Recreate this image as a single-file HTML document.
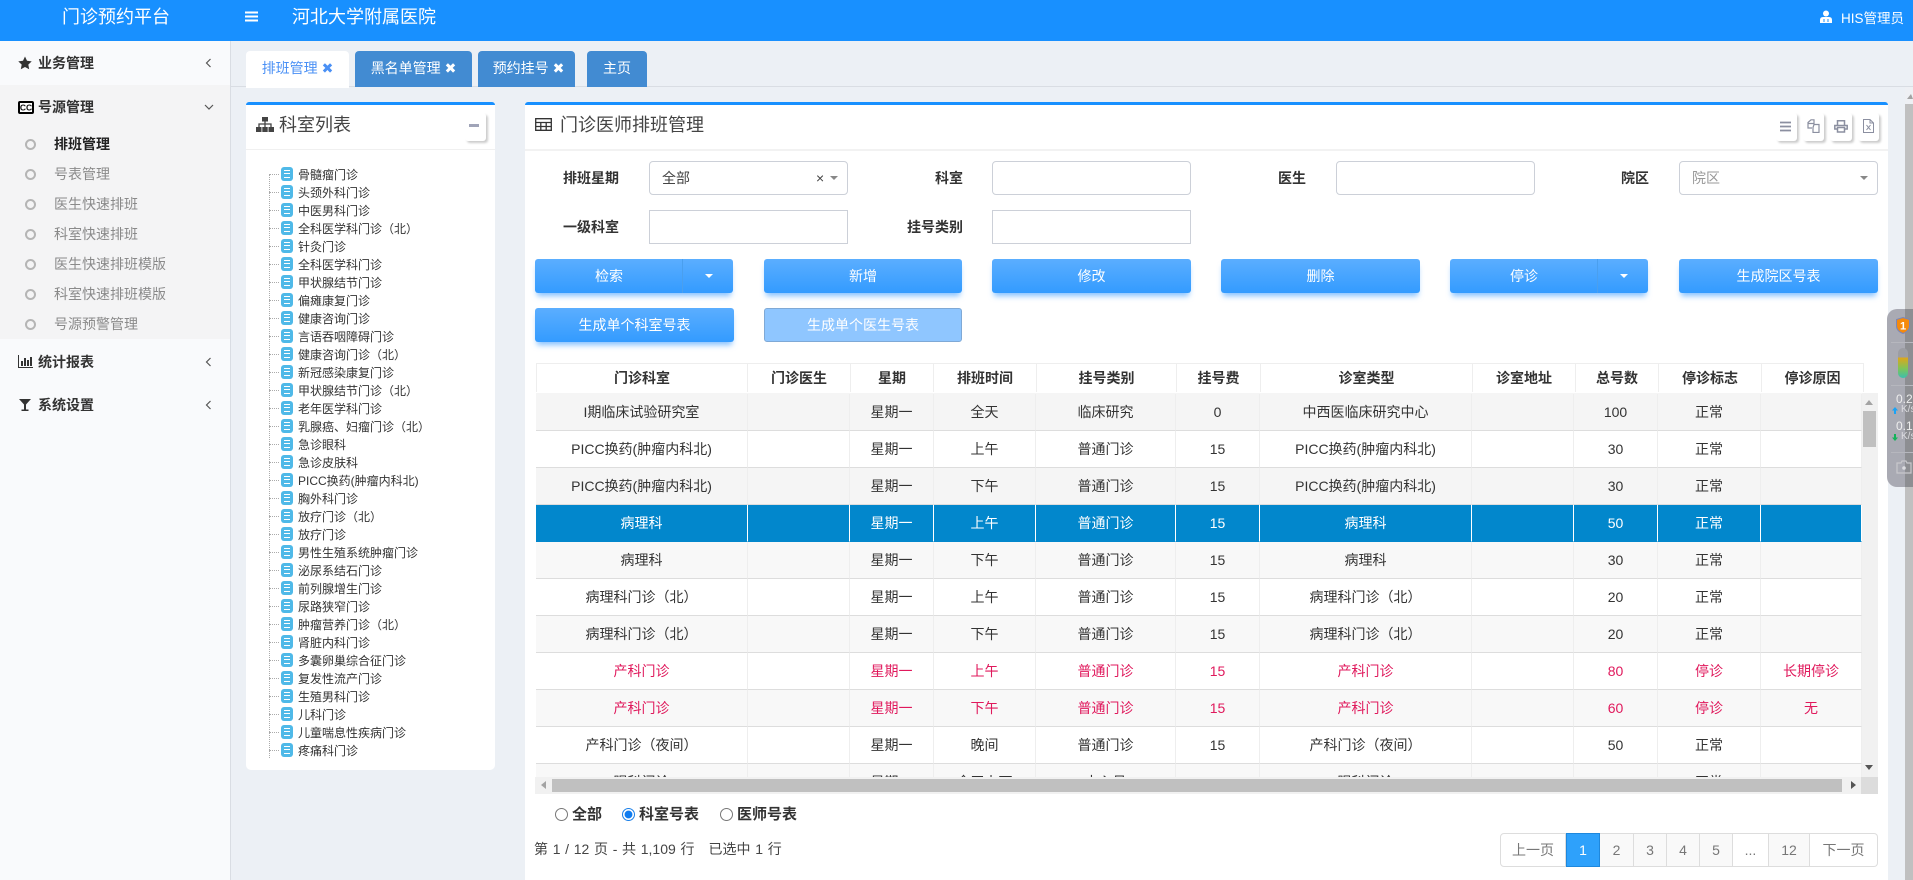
<!DOCTYPE html>
<html lang="zh"><head><meta charset="utf-8"><title>门诊预约平台</title>
<style>
*{box-sizing:border-box}
html,body{margin:0;padding:0;width:1913px;height:880px;overflow:hidden;background:#ecf0f5;font-family:"Liberation Sans","Noto Sans CJK SC",sans-serif;font-size:14px;color:#333}
.a{position:absolute}
#hd{left:0;top:0;width:1913px;height:41px;background:#1890ff;color:#fff}
#side{left:0;top:41px;width:231px;height:839px;background:#f9fafc;border-right:1px solid #d9dde3}
.m{position:absolute;left:38px;font-weight:bold;line-height:20px;color:#333}
.s{position:absolute;left:54px;line-height:20px;color:#8a8a8a}
.c{position:absolute;left:25px;width:11px;height:11px;border:2px solid #b5b5b5;border-radius:50%}
.tab{position:absolute;top:51px;height:36px;line-height:34px;text-align:center;color:#fff;background:#428bd2;border-radius:4px 4px 0 0;font-size:14px}
.panel{position:absolute;background:#fff;border-top:3px solid #1890ff;border-radius:3px 3px 0 0}
.lab{position:absolute;width:90px;text-align:right;font-weight:bold;line-height:20px;color:#333}
.in{position:absolute;width:199px;height:34px;background:#fff;border:1px solid #ccd0d8;border-radius:4px}
.btn{position:absolute;height:34px;line-height:35px;text-align:center;color:#fff;background:linear-gradient(#5baeff,#339bff);border-radius:3px;box-shadow:0 5px 6px -2px rgba(50,150,255,.6)}
.sp{position:absolute;top:0;bottom:0;border-left:1px solid #4a9fee}
.cr{position:absolute;width:0;height:0;border-left:4px solid transparent;border-right:4px solid transparent;border-top:4px solid #fff}
table{border-collapse:separate;border-spacing:0;table-layout:fixed;font-size:14px}
td,th{text-align:center;padding:0;overflow:hidden;white-space:nowrap}
#th{left:536px;top:363px;width:1328px;background:#fff}
#th th{height:29px;border-top:1px solid #eee;border-right:1px solid #eee;font-weight:bold;color:#333}
#th th:first-child{border-left:1px solid #eee}
#bw{left:536px;top:393px;width:1326px;height:384px;overflow:hidden;background:#f5f5f5}
#tb{position:absolute;left:0;top:1px;width:1326px}
#tb td{height:37px;border-bottom:1px solid #ddd;border-right:1px solid #eee;color:#333;background:#fff}
#tb tr.g td{background:#f8f8f8}
#tb tr.h td{background:#f5f5f5}
#tb tr.r td{color:#e0195c}
#tb tr.x td{background:#0287cc;color:#fff;border-right-color:#fff;border-bottom-color:#0287cc}
.tree{position:absolute;left:298px;top:166px;margin:0;padding:0;list-style:none;font-size:12px;color:#333}
.tree li{height:18px;line-height:18px;position:relative;white-space:nowrap}
.tree li:before{content:"";position:absolute;left:-17px;top:1px;width:12px;height:14px;border-radius:3px;background:linear-gradient(#fff,#fff) 3px 3px/6px 1.4px no-repeat,linear-gradient(#fff,#fff) 3px 6.3px/6px 1.4px no-repeat,linear-gradient(#fff,#fff) 3px 9.6px/6px 1.4px no-repeat,#4fb9e8}
.tree li:after{content:"";position:absolute;left:-29px;top:8px;width:10px;border-top:1px dotted #aaa}
.tb{position:absolute;top:113px;height:28px;background:#fff;border-radius:3px;box-shadow:2px 2px 2px #ccc}
.pg{position:absolute;top:833px;height:34px;line-height:33px;text-align:center;color:#777;border:1px solid #ddd;border-left:0;background:#f9f9f9}
.rd{position:absolute;top:808px;width:13px;height:13px;border:1px solid #777;border-radius:50%;background:#fff}
.rt{position:absolute;top:805px;font-weight:bold;font-size:15px;line-height:20px;color:#333}
</style></head><body>

<div id="hd" class="a">
<div class="a" style="left:62px;top:4px;font-size:18px;line-height:26px">门诊预约平台</div>
<svg class="a" style="left:245px;top:11px" width="13" height="11"><path d="M0 1.500h13M0 5.500h13M0 9.500h13" stroke="#fff" stroke-width="2"/></svg>
<div class="a" style="left:292px;top:4px;font-size:18px;line-height:26px">河北大学附属医院</div>
<svg class="a" style="left:1820px;top:10px" width="12" height="13" viewBox="0 0 12 13"><circle cx="6" cy="3.500" r="3" fill="#fff"/><path d="M0 13V10Q0 7 3 7H9Q12 7 12 10V13Z" fill="#fff"/><path d="M4 9v3M8 9v3" stroke="#1890ff"/></svg>
<div class="a" style="left:1841px;top:9px;font-size:13.5px;line-height:20px">HIS管理员</div>
</div>

<div id="side" class="a">
<div class="a" style="left:0;top:44px;width:230px;height:254px;background:#f4f4f5"></div>
<svg class="a" style="left:18px;top:15px" width="14" height="14" viewBox="0 0 14 14"><path d="M7 .5l2 4.300 4.700.6-3.400 3.200.9 4.700L7 11l-4.200 2.300.9-4.700L.3 5.400 5 4.800z" fill="#333"/></svg>
<div class="m" style="top:12px">业务管理</div>
<svg class="a" style="left:205px;top:17px" width="7" height="10"><path d="M5.500 1L1.500 5l4 4" fill="none" stroke="#555" stroke-width="1.200"/></svg>

<svg class="a" style="left:18px;top:60px" width="16" height="13" viewBox="0 0 16 13"><rect x="1" y="1" width="14" height="11" rx="1" fill="#fff" stroke="#000" stroke-width="2"/><text x="8" y="9.600" font-size="8.500" font-weight="bold" text-anchor="middle" fill="#111" font-family="Liberation Sans">CC</text></svg>
<div class="m" style="top:56px">号源管理</div>
<svg class="a" style="left:204px;top:63px" width="10" height="7"><path d="M1 1l4 4 4-4" fill="none" stroke="#555" stroke-width="1.200"/></svg>

<div class="c" style="top:98px"></div><div class="s" style="top:93px;color:#222;font-weight:bold">排班管理</div>
<div class="c" style="top:128px"></div><div class="s" style="top:123px">号表管理</div>
<div class="c" style="top:158px"></div><div class="s" style="top:153px">医生快速排班</div>
<div class="c" style="top:188px"></div><div class="s" style="top:183px">科室快速排班</div>
<div class="c" style="top:218px"></div><div class="s" style="top:213px">医生快速排班模版</div>
<div class="c" style="top:248px"></div><div class="s" style="top:243px">科室快速排班模版</div>
<div class="c" style="top:278px"></div><div class="s" style="top:273px">号源预警管理</div>

<svg class="a" style="left:18px;top:314px" width="15" height="13" viewBox="0 0 15 13"><path d="M.5 0v12.500H15" fill="none" stroke="#333"/><path d="M3 6h2v5H3zM6 3h2v8H6zM9 5h2v6H9zM12 2h2v9h-2z" fill="#333"/></svg>
<div class="m" style="top:311px">统计报表</div>
<svg class="a" style="left:205px;top:316px" width="7" height="10"><path d="M5.500 1L1.500 5l4 4" fill="none" stroke="#555" stroke-width="1.200"/></svg>
<svg class="a" style="left:19px;top:358px" width="12" height="12" viewBox="0 0 12 12"><path d="M0 0h12L7 5.500V10.500H9.500V12H2.500V10.500H5V5.500z" fill="#333"/></svg>
<div class="m" style="top:354px">系统设置</div>
<svg class="a" style="left:205px;top:359px" width="7" height="10"><path d="M5.500 1L1.500 5l4 4" fill="none" stroke="#555" stroke-width="1.200"/></svg>
</div>

<div class="a" style="left:231px;top:86px;width:1682px;height:1px;background:#d9dde3"></div>
<div class="tab" style="left:246px;width:103px;background:#fff;color:#4a90f5;height:37px">排班管理 ✖</div>
<div class="tab" style="left:355px;width:117px">黑名单管理 ✖</div>
<div class="tab" style="left:478px;width:97px;padding-left:4px">预约挂号 ✖</div>
<div class="tab" style="left:587px;width:60px">主页</div>

<div class="panel" style="left:246px;top:102px;width:249px;height:668px;border-radius:3px 3px 5px 5px"></div>
<div class="a" style="left:246px;top:149px;width:249px;height:1px;background:#f0f0f0"></div>
<svg class="a" style="left:256px;top:117px" width="18" height="15" viewBox="0 0 18 15"><path d="M6 0h6v4.500H6zM0 10h5.500v5H0zM6.300 10h5.400v5H6.300zM12.500 10H18v5h-5.500z" fill="#444"/><path d="M9 4v6M3 10V7h12v3" fill="none" stroke="#444" stroke-width="1.300"/></svg>
<div class="a" style="left:279px;top:112px;font-size:18px;line-height:26px;color:#444">科室列表</div>
<div class="tb" style="left:465px;width:21px"><div class="a" style="left:4px;top:11px;width:10px;height:3px;background:#a0a4b8"></div></div>

<div class="a" style="left:269px;top:174px;height:584px;border-left:1px dotted #aaa"></div>
<ul class="tree">
<li>骨髓瘤门诊</li><li>头颈外科门诊</li><li>中医男科门诊</li><li>全科医学科门诊（北）</li><li>针灸门诊</li><li>全科医学科门诊</li><li>甲状腺结节门诊</li><li>偏瘫康复门诊</li><li>健康咨询门诊</li><li>言语吞咽障碍门诊</li><li>健康咨询门诊（北）</li><li>新冠感染康复门诊</li><li>甲状腺结节门诊（北）</li><li>老年医学科门诊</li><li>乳腺癌、妇瘤门诊（北）</li><li>急诊眼科</li><li>急诊皮肤科</li><li>PICC换药(肿瘤内科北)</li><li>胸外科门诊</li><li>放疗门诊（北）</li><li>放疗门诊</li><li>男性生殖系统肿瘤门诊</li><li>泌尿系结石门诊</li><li>前列腺增生门诊</li><li>尿路狭窄门诊</li><li>肿瘤营养门诊（北）</li><li>肾脏内科门诊</li><li>多囊卵巢综合征门诊</li><li>复发性流产门诊</li><li>生殖男科门诊</li><li>儿科门诊</li><li>儿童喘息性疾病门诊</li><li>疼痛科门诊</li>
</ul>

<div class="panel" style="left:525px;top:102px;width:1363px;height:778px"></div>
<div class="a" style="left:525px;top:149px;width:1363px;height:2px;background:#f2f2f2"></div>
<svg class="a" style="left:535px;top:118px" width="17" height="13" viewBox="0 0 17 13"><path d="M.7.700h15.600v11.600H.7zM.7 4.500h15.600M.7 8.500h15.600M5.800 4.500v8M11.200 4.500v8" fill="none" stroke="#333" stroke-width="1.300"/></svg>
<div class="a" style="left:560px;top:112px;font-size:18px;line-height:26px;color:#444">门诊医师排班管理</div>
<div class="tb" style="left:1776px;width:21px"><svg class="a" style="left:4px;top:8px" width="12" height="11"><path d="M0 1.500h11M0 5.500h11M0 9.500h11" stroke="#8b8fa0" stroke-width="1.800"/></svg></div>
<div class="tb" style="left:1803px;width:21px"><svg class="a" style="left:4px;top:6px" width="13" height="14" viewBox="0 0 13 14"><path d="M1 3.500L4 .8h3v3.700H1zM1 4v5h4M7 5.500h5v8H6V8.500z" fill="none" stroke="#8b8fa0" stroke-width="1.200"/></svg></div>
<div class="tb" style="left:1830px;width:22px"><svg class="a" style="left:4px;top:7px" width="14" height="13" viewBox="0 0 14 13"><path d="M3.500 5V.8h7V5M3 9H.8V5.500h12.400V9H11M3.500 7.500h7v4.500h-7z" fill="none" stroke="#8b8fa0" stroke-width="1.500"/></svg></div>
<div class="tb" style="left:1858px;width:21px"><svg class="a" style="left:5px;top:6px" width="11" height="14" viewBox="0 0 11 14"><path d="M.5.500h6.500l3.500 3.500v9.500H.5zM7 .5V4h3.500" fill="none" stroke="#8b8fa0"/><path d="M3.500 6l4 5M7.500 6l-4 5" stroke="#8b8fa0"/></svg></div>

<div class="lab" style="left:529px;top:168px">排班星期</div>
<div class="in" style="left:649px;top:161px"><span class="a" style="left:12px;top:6px;line-height:20px;color:#444">全部</span><span class="a" style="left:166px;top:6px;line-height:20px;color:#444">×</span><span class="cr" style="left:180px;top:14px;border-top-color:#888"></span></div>
<div class="lab" style="left:873px;top:168px">科室</div>
<div class="in" style="left:992px;top:161px"></div>
<div class="lab" style="left:1216px;top:168px">医生</div>
<div class="in" style="left:1336px;top:161px"></div>
<div class="lab" style="left:1559px;top:168px">院区</div>
<div class="in" style="left:1679px;top:161px"><span class="a" style="left:12px;top:6px;line-height:20px;color:#999">院区</span><span class="cr" style="left:180px;top:14px;border-top-color:#888"></span></div>
<div class="lab" style="left:529px;top:217px">一级科室</div>
<div class="in" style="left:649px;top:210px;border-radius:0"></div>
<div class="lab" style="left:873px;top:217px">挂号类别</div>
<div class="in" style="left:992px;top:210px;border-radius:0"></div>

<div class="btn" style="left:535px;top:259px;width:198px;padding-right:50px">检索<i class="sp" style="left:147px"></i><i class="cr" style="left:170px;top:15px"></i></div>
<div class="btn" style="left:764px;top:259px;width:198px">新增</div>
<div class="btn" style="left:992px;top:259px;width:199px">修改</div>
<div class="btn" style="left:1221px;top:259px;width:199px">删除</div>
<div class="btn" style="left:1450px;top:259px;width:198px;padding-right:50px">停诊<i class="sp" style="left:147px"></i><i class="cr" style="left:170px;top:15px"></i></div>
<div class="btn" style="left:1679px;top:259px;width:199px">生成院区号表</div>
<div class="btn" style="left:535px;top:308px;width:199px">生成单个科室号表</div>
<div class="btn" style="left:764px;top:308px;width:198px;background:#8fc6ff;border:1px solid #7fa9d6;box-shadow:none;line-height:33px">生成单个医生号表</div>

<table id="th" class="a"><colgroup><col style="width:212px"><col style="width:103px"><col style="width:83px"><col style="width:103px"><col style="width:140px"><col style="width:84px"><col style="width:212px"><col style="width:103px"><col style="width:83px"><col style="width:103px"><col style="width:102px"></colgroup>
<tr><th>门诊科室</th><th>门诊医生</th><th>星期</th><th>排班时间</th><th>挂号类别</th><th>挂号费</th><th>诊室类型</th><th>诊室地址</th><th>总号数</th><th>停诊标志</th><th>停诊原因</th></tr></table>

<div id="bw" class="a"><table id="tb"><colgroup><col style="width:212px"><col style="width:102px"><col style="width:84px"><col style="width:102px"><col style="width:140px"><col style="width:84px"><col style="width:212px"><col style="width:102px"><col style="width:84px"><col style="width:103px"><col style="width:101px"></colgroup>
<tr class="g h"><td>I期临床试验研究室</td><td></td><td>星期一</td><td>全天</td><td>临床研究</td><td>0</td><td>中西医临床研究中心</td><td></td><td>100</td><td>正常</td><td></td></tr>
<tr><td>PICC换药(肿瘤内科北)</td><td></td><td>星期一</td><td>上午</td><td>普通门诊</td><td>15</td><td>PICC换药(肿瘤内科北)</td><td></td><td>30</td><td>正常</td><td></td></tr>
<tr class="g h"><td>PICC换药(肿瘤内科北)</td><td></td><td>星期一</td><td>下午</td><td>普通门诊</td><td>15</td><td>PICC换药(肿瘤内科北)</td><td></td><td>30</td><td>正常</td><td></td></tr>
<tr class="x"><td>病理科</td><td></td><td>星期一</td><td>上午</td><td>普通门诊</td><td>15</td><td>病理科</td><td></td><td>50</td><td>正常</td><td></td></tr>
<tr class="g"><td>病理科</td><td></td><td>星期一</td><td>下午</td><td>普通门诊</td><td>15</td><td>病理科</td><td></td><td>30</td><td>正常</td><td></td></tr>
<tr><td>病理科门诊（北）</td><td></td><td>星期一</td><td>上午</td><td>普通门诊</td><td>15</td><td>病理科门诊（北）</td><td></td><td>20</td><td>正常</td><td></td></tr>
<tr class="g"><td>病理科门诊（北）</td><td></td><td>星期一</td><td>下午</td><td>普通门诊</td><td>15</td><td>病理科门诊（北）</td><td></td><td>20</td><td>正常</td><td></td></tr>
<tr class="r"><td>产科门诊</td><td></td><td>星期一</td><td>上午</td><td>普通门诊</td><td>15</td><td>产科门诊</td><td></td><td>80</td><td>停诊</td><td>长期停诊</td></tr>
<tr class="g r"><td>产科门诊</td><td></td><td>星期一</td><td>下午</td><td>普通门诊</td><td>15</td><td>产科门诊</td><td></td><td>60</td><td>停诊</td><td>无</td></tr>
<tr><td>产科门诊（夜间）</td><td></td><td>星期一</td><td>晚间</td><td>普通门诊</td><td>15</td><td>产科门诊（夜间）</td><td></td><td>50</td><td>正常</td><td></td></tr>
<tr class="g"><td>眼科门诊</td><td></td><td>星期一</td><td>全天上下</td><td>中心号</td><td>20</td><td>眼科门诊</td><td></td><td>500</td><td>正常</td><td></td></tr>
</table></div>

<div class="a" style="left:1862px;top:393px;width:16px;height:384px;background:#f1f1f1"></div>
<div class="a" style="left:1863px;top:411px;width:13px;height:36px;background:#c0c0c0"></div>
<div class="a" style="left:1865px;top:400px;border-left:4px solid transparent;border-right:4px solid transparent;border-bottom:5px solid #a3a3a3;width:0;height:0"></div>
<div class="a" style="left:1865px;top:765px;border-left:4px solid transparent;border-right:4px solid transparent;border-top:5px solid #555;width:0;height:0"></div>
<div class="a" style="left:535px;top:777px;width:1327px;height:17px;background:#f1f1f1"></div>
<div class="a" style="left:552px;top:779px;width:1290px;height:13px;background:#c0c0c0"></div>
<div class="a" style="left:541px;top:781px;border-top:4px solid transparent;border-bottom:4px solid transparent;border-right:5px solid #a3a3a3;width:0;height:0"></div>
<div class="a" style="left:1851px;top:781px;border-top:4px solid transparent;border-bottom:4px solid transparent;border-left:5px solid #555;width:0;height:0"></div>
<div class="a" style="left:1861px;top:777px;width:17px;height:17px;background:#dcdcdc"></div>

<div class="rd" style="left:555px"></div><div class="rt" style="left:572px">全部</div>
<div class="rd" style="left:622px;border:1px solid #1a7fe8;background:radial-gradient(circle,#0f7cf0 0 3.600px,#fff 4.200px)"></div><div class="rt" style="left:639px">科室号表</div>
<div class="rd" style="left:720px"></div><div class="rt" style="left:737px">医师号表</div>
<div class="a" style="left:534px;top:839px;line-height:20px;color:#444;white-space:pre;word-spacing:.8px">第 1 / 12 页 - 共 1,109 行   已选中 1 行</div>

<div class="pg" style="left:1500px;width:66px;border-left:1px solid #ddd;border-radius:4px 0 0 4px;background:#fff">上一页</div>
<div class="pg" style="left:1566px;width:34px;background:#2ea1fb;border:1px solid #1e88dd;color:#fff">1</div>
<div class="pg" style="left:1600px;width:34px">2</div>
<div class="pg" style="left:1634px;width:33px">3</div>
<div class="pg" style="left:1667px;width:33px">4</div>
<div class="pg" style="left:1700px;width:33px">5</div>
<div class="pg" style="left:1733px;width:36px;background:#fff">...</div>
<div class="pg" style="left:1769px;width:41px">12</div>
<div class="pg" style="left:1810px;width:68px;border-radius:0 4px 4px 0;background:#fff">下一页</div>

<div class="a" style="left:1905px;top:87px;width:8px;height:793px;background:#eef0f4"></div>
<div class="a" style="left:1905px;top:104px;width:8px;height:776px;background:#c0c0c0"></div>
<div class="a" style="left:1907px;top:94px;border-left:4px solid transparent;border-right:2px solid transparent;border-bottom:5px solid #a3a3a3;width:0;height:0"></div>

<div class="a" style="left:1887px;top:309px;width:26px;height:178px;background:#a9aab3;border-radius:10px 0 0 10px;overflow:hidden;color:#eee">
<div class="a" style="left:18px;top:0;width:8px;height:178px;background:#8d8e92"></div>
<svg class="a" style="left:9px;top:8px" width="14" height="17" viewBox="0 0 14 17"><path d="M7 .5L13.500 2.500V9Q13.500 14 7 16.500Q.5 14 .5 9V2.500z" fill="#f58a0c" stroke="#7a86b8"/><text x="7" y="12.500" font-size="11" font-weight="bold" text-anchor="middle" fill="#fff" font-family="Liberation Sans">1</text></svg>
<div class="a" style="left:4px;top:33px;width:22px;height:1px;background:#b6b7be"></div>
<div class="a" style="left:11px;top:39px;width:10px;height:30px;border-radius:5px;background:linear-gradient(#9c9da3 0 9px,#dca81c 10px,#7cc55a 21px,#3cbfae)"></div>
<div class="a" style="left:4px;top:76px;width:22px;height:1px;background:#b6b7be"></div>
<div class="a" style="left:9px;top:83px;font-size:12px;line-height:14px">0.2</div>
<svg class="a" style="left:5px;top:98px" width="6" height="7" viewBox="0 0 6 7"><path d="M3 0L6 3.500H4V7H2V3.500H0z" fill="#1aa3f5"/></svg>
<div class="a" style="left:14px;top:95px;font-size:10px;line-height:12px;color:#dcdce0">K/s</div>
<div class="a" style="left:9px;top:110px;font-size:12px;line-height:14px">0.1</div>
<svg class="a" style="left:5px;top:125px" width="6" height="7" viewBox="0 0 6 7"><path d="M3 7L6 3.500H4V0H2V3.500H0z" fill="#12b35a"/></svg>
<div class="a" style="left:14px;top:122px;font-size:10px;line-height:12px;color:#dcdce0">K/s</div>
<div class="a" style="left:4px;top:143px;width:22px;height:1px;background:#b6b7be"></div>
<svg class="a" style="left:9px;top:151px" width="16" height="14" viewBox="0 0 16 14"><path d="M1 3h4l1-2h4l1 2h4v10H1z" fill="none" stroke="#c8c8cc" stroke-width="1.200"/><circle cx="8" cy="8" r="1.800" fill="#dcdce0"/></svg>
</div>
</body></html>
